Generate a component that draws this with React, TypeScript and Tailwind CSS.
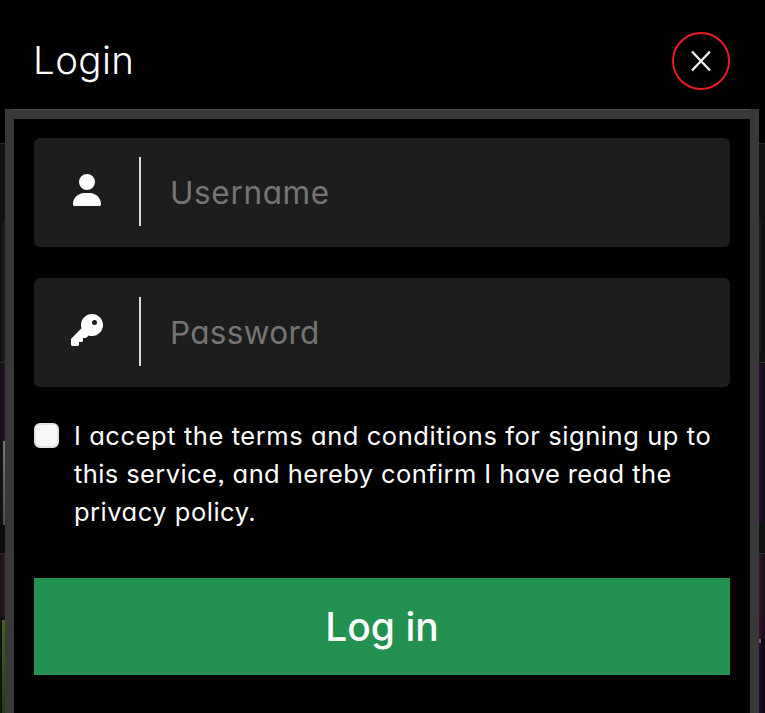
import { FaKey, FaUser } from "react-icons/fa6";
import type { ReactNode } from "react";

interface FieldProps {
  icon: ReactNode;
  type: string;
  placeholder: string;
  tracking: string;
}

const Field = ({ icon, type, placeholder, tracking }: FieldProps) => {
  return (
    <label className="flex h-[109px] items-center rounded-md bg-[#1d1d1d]">
      <span className="flex w-[105px] shrink-0 justify-center pb-1.5 text-[32px] text-white">{icon}</span>
      <span className="mb-0.5 h-[69px] w-0.5 shrink-0 bg-[#dcdcdc]" />
      <input
        type={type}
        placeholder={placeholder}
        className={`ml-[29px] min-w-0 flex-1 bg-transparent text-[31.5px] font-normal text-white outline-none placeholder:text-[#757575] ${tracking}`}
      />
    </label>
  );
};

const LeftEdge = () => (
  <div className="flex w-[5px] shrink-0 flex-col pt-[34px]">
    <div className="h-[78px] border-t border-[#292929] bg-[#111111]" />
    <div className="h-[141px] border-l-2 border-[#111111] bg-[#1b1b1b]" />
    <div className="h-[79px] border-t border-[#303030] bg-gradient-to-r from-[#151216] to-[#28102b]" />
    <div className="h-[84px] border-l-[3px] border-[#111111] bg-gradient-to-b from-[#777777] to-[#4d4d4d]" />
    <div className="h-7 bg-[#0d0c0d]" />
    <div className="h-16 border-t border-[#302329] bg-gradient-to-r from-[#1b1217] to-[#351628]" />
    <div className="h-[3px] bg-[#111111]" />
    <div className="flex-1 border-l-2 border-[#111111] bg-gradient-to-b from-[#45631c] to-[#243d0b]" />
  </div>
);

const RightEdge = () => (
  <div className="flex w-1.5 shrink-0 flex-col pt-[34px]">
    <div className="h-[76px] border-t border-[#292929] bg-[#111111]" />
    <div className="h-[134px] border-r-4 border-[#111111] bg-[#1b1b1b]" />
    <div className="h-[9px] bg-[#111111]" />
    <div className="h-[160px] border-t border-[#303030] bg-gradient-to-r from-[#2b0834] to-[#100d13]" />
    <div className="h-[31px] bg-[#111012]" />
    <div className="h-16 border-t border-[#342b2d] bg-gradient-to-r from-[#35152a] to-[#180f15]" />
    <div className="h-[22px] bg-gradient-to-r from-[#3b0c2d] to-[#180b18]" />
    <div className="h-1 w-0.5 bg-[#8d4b75]" />
    <div className="flex-1 bg-gradient-to-r from-[#1d0b2e] to-[#0d0813]" />
  </div>
);

export default function App() {
  return (
    <main
      className="flex h-[713px] w-[765px] flex-col overflow-hidden bg-black text-white"
      style={{ fontFamily: 'Inter, "Open Sans", sans-serif', fontFeatureSettings: '"cv11", "ss03"' }}
    >
      <header className="flex h-[109px] shrink-0 items-center justify-between pt-[13px] pr-[35px] pl-[33px]">
        <h1 className="text-[38.5px] font-light tracking-[0.4px]">Login</h1>
        <button aria-label="Close" className="flex size-[58px] items-center justify-center rounded-full border-2 border-[#e61b23]">
          <svg width="20" height="22" viewBox="0 0 20 22" fill="none" stroke="#eeeeee" strokeWidth="2.4">
            <path d="M1 1.5L19 20.5M19 1.5L1 20.5" />
          </svg>
        </button>
      </header>
      <div className="flex min-h-0 flex-1">
        <LeftEdge />
        <section className="min-w-0 flex-1 border-x-[9px] border-[#383838]">
          <div className="h-2.5 border-t border-[#4b4b4b] bg-[#383838]" />
          <form className="pt-[19px] pr-5 pl-5">
            <div className="flex flex-col gap-[31px]">
              <Field icon={<FaUser />} type="text" placeholder="Username" tracking="tracking-[0.65px]" />
              <Field icon={<FaKey />} type="password" placeholder="Password" tracking="tracking-[0.3px]" />
            </div>
            <label className="mt-[30px] flex items-start">
              <input type="checkbox" className="mt-[6px] size-[25px] shrink-0 appearance-none rounded-md border-2 border-[#e2e2e2] bg-[#f8f8f8]" />
              <span className="ml-[15px] text-[25.5px] leading-[38px] whitespace-nowrap">
                <span className="block tracking-[0.57px]">I accept the terms and conditions for signing up to</span>
                <span className="block tracking-[0.4px]">this service, and hereby confirm I have read the</span>
                <span className="block tracking-[0.5px]">privacy policy.</span>
              </span>
            </label>
            <button type="button" className="mt-[47px] h-[97px] w-full bg-[#239150] pt-0.5 text-[39px] font-medium">
              Log in
            </button>
          </form>
        </section>
        <RightEdge />
      </div>
    </main>
  );
}
